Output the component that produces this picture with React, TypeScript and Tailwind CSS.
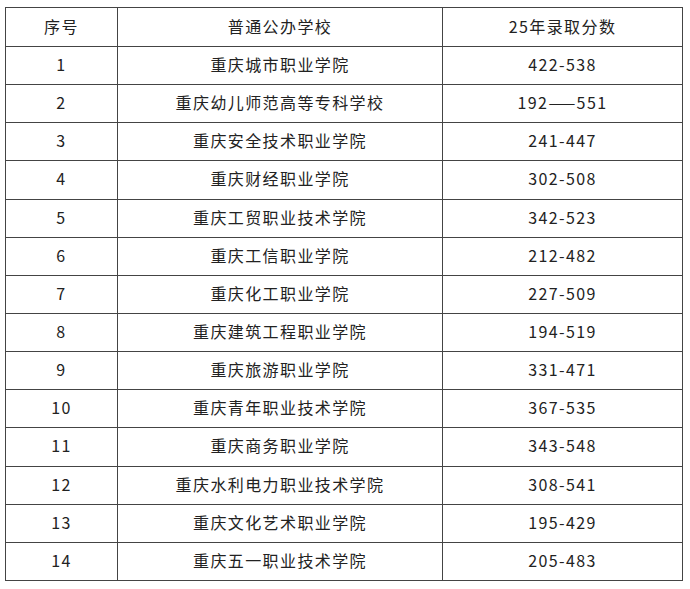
import React from 'react';

const rows = [
  ['1', '重庆城市职业学院', '422-538'],
  ['2', '重庆幼儿师范高等专科学校', '192——551'],
  ['3', '重庆安全技术职业学院', '241-447'],
  ['4', '重庆财经职业学院', '302-508'],
  ['5', '重庆工贸职业技术学院', '342-523'],
  ['6', '重庆工信职业学院', '212-482'],
  ['7', '重庆化工职业学院', '227-509'],
  ['8', '重庆建筑工程职业学院', '194-519'],
  ['9', '重庆旅游职业学院', '331-471'],
  ['10', '重庆青年职业技术学院', '367-535'],
  ['11', '重庆商务职业学院', '343-548'],
  ['12', '重庆水利电力职业技术学院', '308-541'],
  ['13', '重庆文化艺术职业学院', '195-429'],
  ['14', '重庆五一职业技术学院', '205-483'],
];

const App = () => {
  return (
    <div className="bg-white w-[690px] h-[589px] pt-[7px] pl-[5px]" style={{ fontFamily: '"Noto Sans CJK SC", "Noto Sans", sans-serif' }}>
      <table className="border-collapse text-[16px] text-[#222] tracking-[1.4px]">
        <thead>
          <tr className="h-[39px]">
            <th className="w-[112px] border border-[#444] font-normal text-center p-0 pb-[3px]">序号</th>
            <th className="w-[325px] border border-[#444] font-normal text-center p-0 pb-[3px]">普通公办学校</th>
            <th className="w-[240px] border border-[#444] font-normal text-center p-0 pb-[3px]">25年录取分数</th>
          </tr>
        </thead>
        <tbody>
          {rows.map((r) => (
            <tr key={r[0]} className="h-[38.15px]">
              <td className="border border-[#444] text-center p-0 pb-[3px]">{r[0]}</td>
              <td className="border border-[#444] text-center p-0 pb-[3px]">{r[1]}</td>
              <td className="border border-[#444] text-center p-0 pb-[3px]">{r[2]}</td>
            </tr>
          ))}
        </tbody>
      </table>
    </div>
  );
};

export default App;
